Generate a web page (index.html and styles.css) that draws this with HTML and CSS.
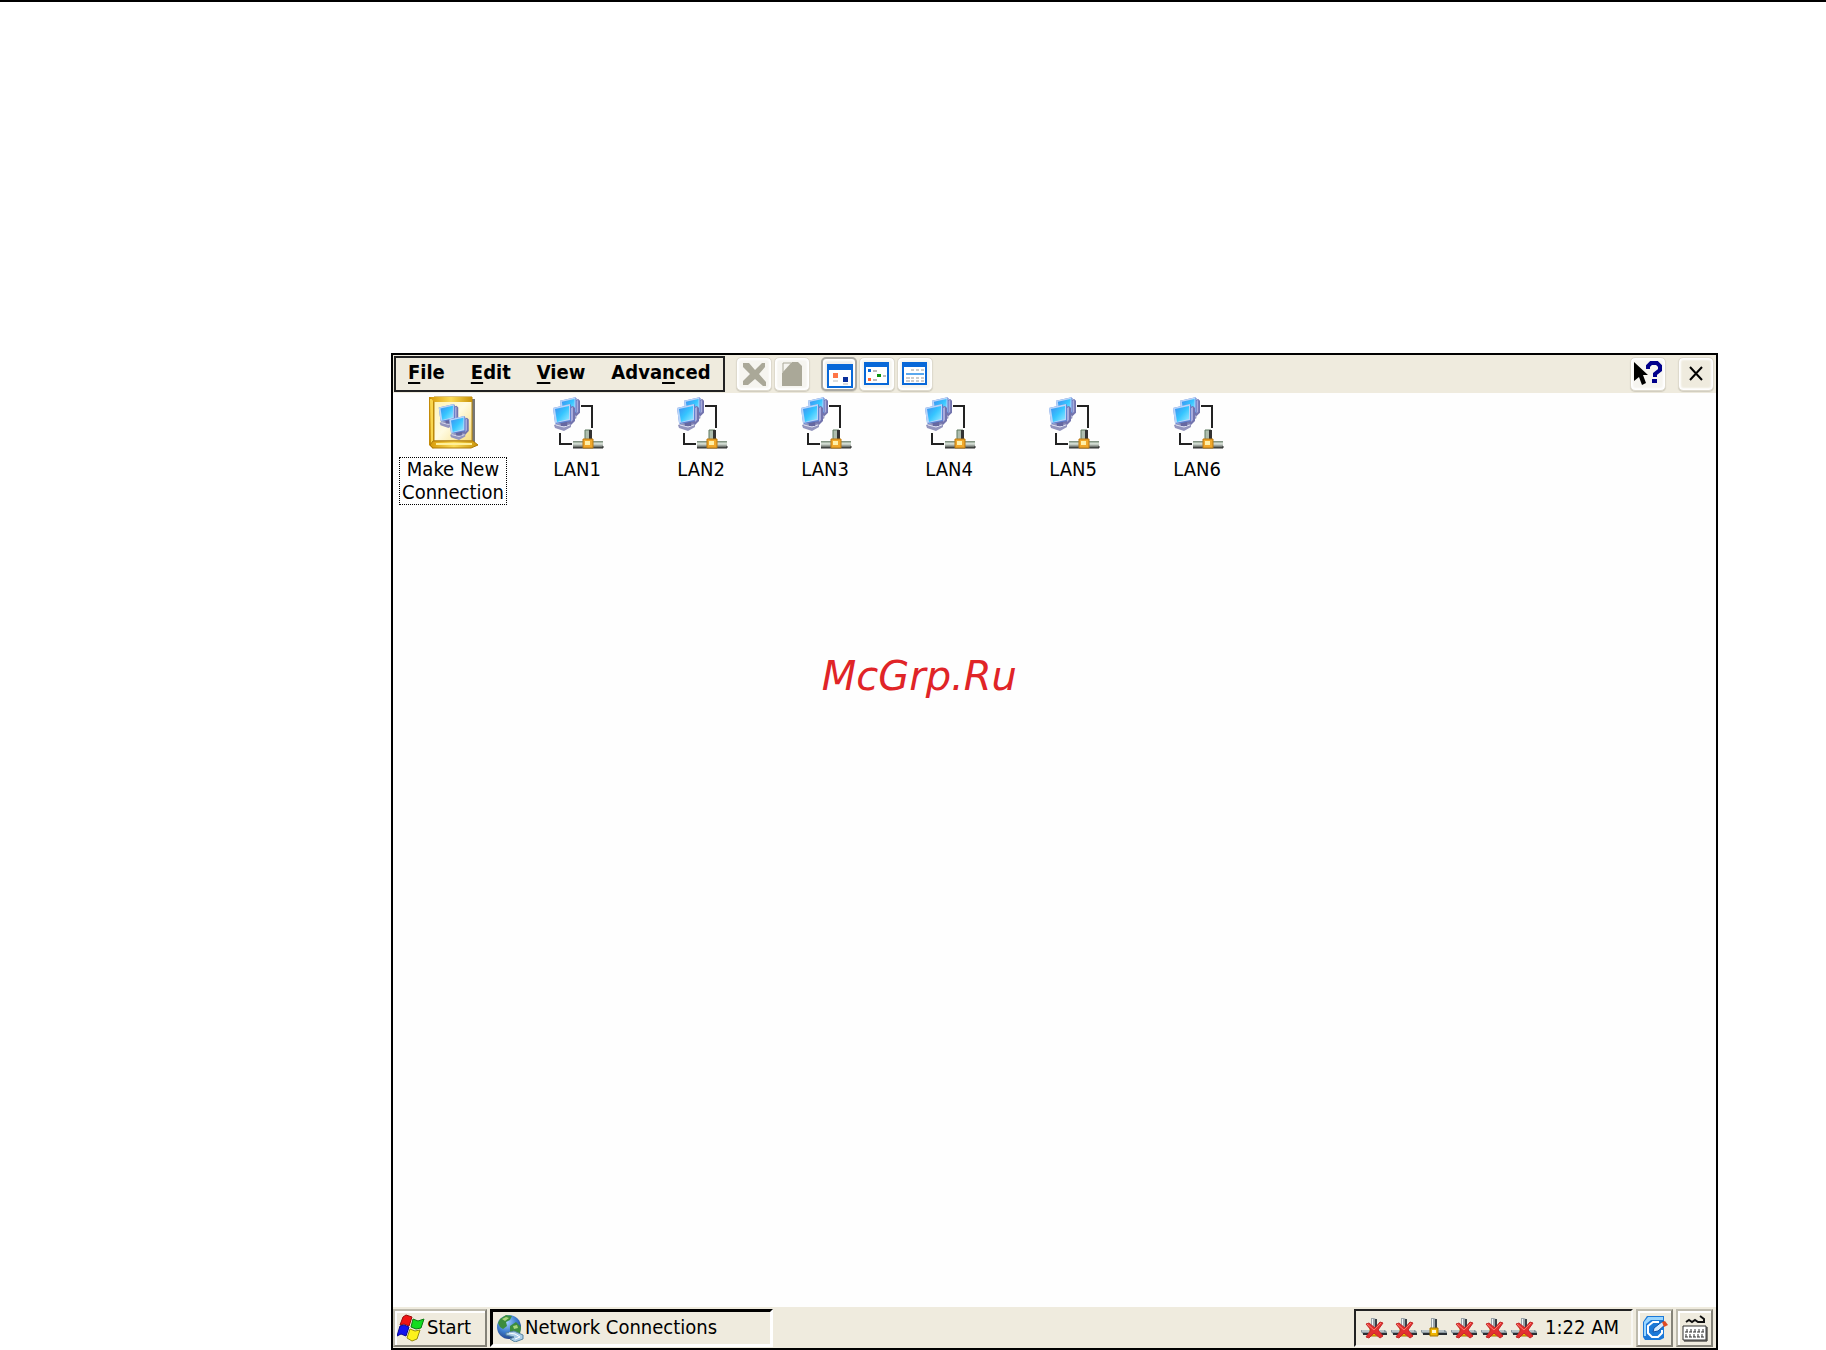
FILE: index.html
```html
<!DOCTYPE html>
<html lang="en">
<head>
    <meta charset="UTF-8">
    <meta name="viewport" content="width=device-width, initial-scale=1.0">
    <title>Network Connections</title>
    <link rel="stylesheet" href="styles.css">
</head>
<body>
    <!-- Shared icons -->
    <svg class="sprite" aria-hidden="true">
        <defs>
            <linearGradient id="glass" x1="0" y1="0" x2="1" y2="1">
                <stop offset="0" stop-color="#3f8df0"/>
                <stop offset="0.5" stop-color="#35c5ff"/>
                <stop offset="1" stop-color="#9beaff"/>
            </linearGradient>
            <linearGradient id="gold" x1="0" y1="0" x2="1" y2="0">
                <stop offset="0" stop-color="#d79a08"/>
                <stop offset="0.5" stop-color="#fbdc58"/>
                <stop offset="1" stop-color="#c99207"/>
            </linearGradient>
            <linearGradient id="paper" x1="0" y1="0" x2="1" y2="1">
                <stop offset="0" stop-color="#fff3b0"/>
                <stop offset="0.5" stop-color="#fffbe2"/>
                <stop offset="1" stop-color="#f7dc7c"/>
            </linearGradient>
            <linearGradient id="pipe" x1="0" y1="0" x2="0" y2="1">
                <stop offset="0" stop-color="#6f8370"/>
                <stop offset="0.4" stop-color="#dfe8df"/>
                <stop offset="1" stop-color="#3c403c"/>
            </linearGradient>
            <radialGradient id="sea" cx="0.4" cy="0.3" r="0.8">
                <stop offset="0" stop-color="#a8d5ff"/>
                <stop offset="0.5" stop-color="#3e7fd0"/>
                <stop offset="1" stop-color="#1b3478"/>
            </radialGradient>
        </defs>
        <symbol id="computer" viewBox="0 0 22 27">
            <path d="M17 3l3-1 2 2v13l-4 4-4-1z" fill="#7274ae"/>
            <path d="M18 4l2-1v13l-2 2z" fill="#a9acdc"/>
            <path d="M1 21l8-3 9 2v3l-7 4-9-3z" fill="#9395bd"/>
            <path d="M3 21l8 2 6-2" fill="none" stroke="#dfe1f3"/>
            <path d="M7 17h8l-1 5H8z" fill="#6668a0"/>
            <path d="M0 4l17-4 1 1v16L3 20l-1-1z" fill="#5f83d2"/>
            <path d="M0 4l17-4v16L2 19z" fill="#b9d5fa"/>
            <path d="M2 5l14-3v13L4 18z" fill="url(#glass)"/>
        </symbol>
        <symbol id="lan" viewBox="4 4 56 56">
            <use href="#computer" x="15" y="6" width="20" height="25"/>
            <use href="#computer" x="8" y="13" width="22" height="27"/>
            <path d="M36 15h11v22M15 42v11h12" fill="none" stroke="#222" stroke-width="2"/>
            <path d="M40 39h6v10h-6z" fill="#aebdae" stroke="#5f7a60"/>
            <path d="M44 39h3v10h-3z" fill="#333"/>
            <path d="M28 50h30v7H28z" fill="url(#pipe)"/>
            <path d="M28 57h30v-2" fill="none" stroke="#333"/>
            <path d="M38 48h10v9H38z" fill="#f0a82c" stroke="#b97910"/>
            <path d="M40 50h5v4h-5z" fill="#fff0a8"/>
        </symbol>
        <symbol id="plug" viewBox="0 0 26 22">
            <path d="M10 1h3l2 1v11h-5z" fill="#9ba5ab"/>
            <path d="M11 2h1v10h-1z" fill="#f1f5f7"/>
            <path d="M14 2h2v11h-2z" fill="#3a4248"/>
            <path d="M0 13h24l2 2v2H2l-2-2z" fill="#8c999f"/>
            <path d="M1 14h22" stroke="#e4eced"/>
            <path d="M2 17h24" stroke="#292e32" stroke-width="2"/>
            <path d="M9 11h8v8H9z" fill="#efb400" stroke="#a87800"/>
            <path d="M11 13h4v3h-4z" fill="#fff9cc"/>
        </symbol>
        <symbol id="plug-off" viewBox="0 0 26 22">
            <use href="#plug" width="26" height="22"/>
            <path d="M5 7l3-1 6 5 5-6 3 1-5 7 5 6-3 2-6-5-5 5-3-1 5-7z" fill="#e33131" stroke="#c42a2a"/>
            <path d="M6 7l7 6 7-7" fill="none" stroke="#ff7b70"/>
        </symbol>
    </svg>

    <main class="screen">
        <!-- Toolbar -->
        <header class="toolbar">
            <nav class="menu">
                <button type="button"><u>F</u>ile</button>
                <button type="button"><u>E</u>dit</button>
                <button type="button"><u>V</u>iew</button>
                <button type="button">Adva<u>n</u>ced</button>
            </nav>
            <div class="tools">
                <button type="button" class="tool" aria-label="Delete" disabled>
                    <svg width="28" height="28" viewBox="0 0 28 28"><path d="M3 3h6l6 7 7-7h3v4l-6 7 7 8v4h-3l-8-7-7 6H3v-4l7-7-7-7z" fill="#aaa898"/></svg>
                </button>
                <button type="button" class="tool" aria-label="Properties" disabled>
                    <svg width="28" height="28" viewBox="0 0 28 28"><path d="M14 2h6l4 4v20H4V13z" fill="#aaa898"/><path d="M5 12V3h8" fill="none" stroke="#aaa898"/></svg>
                </button>
            </div>
            <div class="tools">
                <button type="button" class="tool active" aria-label="Large icons">
                    <svg width="28" height="28" viewBox="0 0 28 28"><path d="M3 5h24v22H3z" fill="#fff" stroke="#0868d8" stroke-width="2"/><path d="M2 4h26v6H2z" fill="#0868d8"/><path d="M8 13h5v5H8z" fill="#ff7547"/><path d="M18 17h5v5h-5z" fill="#092e9b"/><path d="M8 21h5M18 24h5" stroke="#bbb"/></svg>
                </button>
                <button type="button" class="tool" aria-label="Small icons">
                    <svg width="28" height="28" viewBox="0 0 28 28"><path d="M2 3h23v21H2z" fill="#fff" stroke="#0868d8" stroke-width="2"/><path d="M1 2h25v5H1z" fill="#0868d8"/><path d="M5 9h3v3H5z" fill="#0868d8"/><path d="M14 14h4v3h-4z" fill="#0c950c"/><path d="M5 18h3v3H5z" fill="#ff6531"/><path d="M10 11h4M20 16h3M10 20h4" stroke="#bbb" stroke-width="2"/></svg>
                </button>
                <button type="button" class="tool" aria-label="Details">
                    <svg width="28" height="28" viewBox="0 0 28 28"><path d="M2 3h23v21H2z" fill="#fff" stroke="#0868d8" stroke-width="2"/><path d="M1 2h25v5H1z" fill="#0868d8"/><path d="M5 14h18" stroke="#5aa8ee" stroke-width="2"/><path d="M10 10h3m2 0h3m2 0h3M5 18h4m1 0h3m2 0h3m2 0h3M5 21h4m1 0h3m2 0h3m2 0h3" stroke="#999"/></svg>
                </button>
            </div>
            <div class="tools window-tools">
                <button type="button" class="tool" aria-label="Help">
                    <svg width="28" height="28" viewBox="0 0 28 28"><path d="M0 2l14 13H9l3 8-4 2-3-8-5 4z" fill="#000"/><path d="M14 9V6l3-3h6l3 3v4l-5 4v3" fill="none" stroke="#00008b" stroke-width="4"/><path d="M18 19h5v4h-5z" fill="#00008b"/></svg>
                </button>
                <button type="button" class="tool close" aria-label="Close">
                    <svg width="28" height="28" viewBox="0 0 28 28"><path d="M8 7l12 13M20 7L8 20" stroke="#000" stroke-width="2"/></svg>
                </button>
            </div>
        </header>

        <!-- Connections -->
        <section class="connections">
            <a href="#new" class="item selected">
                <svg width="56" height="56" viewBox="15 4 56 56">
                    <path d="M62 8h3v45h-4z" fill="#777"/>
                    <path d="M19 6h6v44l-2 8-4-4z" fill="#c48b08"/>
                    <path d="M20 8h3v44l-2 3z" fill="#f9d64d"/>
                    <path d="M24 6h38v44H24z" fill="url(#paper)" stroke="#b7850b"/>
                    <path d="M20 6h42v5H24z" fill="url(#gold)"/>
                    <path d="M23 50h40l5 4-7 3H23l-3-3z" fill="url(#gold)" stroke="#b07b08"/>
                    <path d="M26 53h36" stroke="#fff09a" stroke-width="2"/>
                    <use href="#computer" x="28" y="13" width="21" height="24"/>
                    <use href="#computer" x="39" y="25" width="20" height="24"/>
                </svg>
                <span class="label">Make New<br>Connection</span>
            </a>
            <a href="#lan1" class="item"><svg width="56" height="56"><use href="#lan"/></svg><span class="label">LAN1</span></a>
            <a href="#lan2" class="item"><svg width="56" height="56"><use href="#lan"/></svg><span class="label">LAN2</span></a>
            <a href="#lan3" class="item"><svg width="56" height="56"><use href="#lan"/></svg><span class="label">LAN3</span></a>
            <a href="#lan4" class="item"><svg width="56" height="56"><use href="#lan"/></svg><span class="label">LAN4</span></a>
            <a href="#lan5" class="item"><svg width="56" height="56"><use href="#lan"/></svg><span class="label">LAN5</span></a>
            <a href="#lan6" class="item"><svg width="56" height="56"><use href="#lan"/></svg><span class="label">LAN6</span></a>
        </section>

        <!-- Taskbar -->
        <footer class="taskbar">
            <button type="button" class="raised start">
                <svg width="28" height="28" viewBox="0 0 28 28">
                    <path d="M6 3l3-2 6 2-3 9-5-2-4 1z" fill="#f01414" stroke="#9b0b0b"/>
                    <path d="M16 5l5 2 6-2-3 9-5 1-5-2z" fill="#12dc20" stroke="#0b7c12"/>
                    <path d="M3 12l4-1 5 2-3 9-5-2-4 2z" fill="#1414ef" stroke="#080894"/>
                    <path d="M13 15l5 2 5-1-3 9-5 2-5-3z" fill="#fdf21b" stroke="#968d0b"/>
                </svg>
                Start
            </button>
            <button type="button" class="task">
                <svg width="28" height="28" viewBox="0 0 28 28">
                    <circle cx="13" cy="13" r="12" fill="url(#sea)"/>
                    <path d="M4 5l6-4 6 1-2 4-4 2 1 4-4 3-3-2-2-4zM14 12l6-4 5 5-1 7-5-2-5 1z" fill="#3c8d3e"/>
                    <path d="M6 5l4-2 3 1-4 3zM17 12l4-1 1 3-4 1z" fill="#a9d67d"/>
                    <path d="M10 19l8-2 9 4v4l-8 3-5-3 4-2-8-2z" fill="#a9cde8" stroke="#57839f"/>
                    <path d="M13 19l6 1 5 3-5 2" fill="none" stroke="#fff"/>
                </svg>
                Network Connections
            </button>
            <div class="tray">
                <svg width="26" height="22"><use href="#plug-off"/></svg>
                <svg width="26" height="22"><use href="#plug-off"/></svg>
                <svg width="26" height="22"><use href="#plug"/></svg>
                <svg width="26" height="22"><use href="#plug-off"/></svg>
                <svg width="26" height="22"><use href="#plug-off"/></svg>
                <svg width="26" height="22"><use href="#plug-off"/></svg>
                <time datetime="01:22">1:22 AM</time>
            </div>
            <button type="button" class="raised square" aria-label="Show desktop">
                <svg width="28" height="28" viewBox="0 0 28 28">
                    <path d="M6 2h17v22l-4 2H4l-2-3V8z" fill="#1c79d8"/>
                    <path d="M7 3h15v3H10L5 10v12H3V8z" fill="#9ad6ff"/>
                    <path d="M18 8h-6l-5 4v7l4 4h6l4-4v-3" fill="none" stroke="#fff" stroke-width="2"/>
                    <path d="M12 18l1-4 9-7 3 3-8 7z" fill="#d5eaff" stroke="#1353a8"/>
                    <path d="M21 8l3-1 3 4-4 2z" fill="#e04a22"/>
                </svg>
            </button>
            <button type="button" class="raised square" aria-label="Keyboard">
                <svg width="28" height="28" viewBox="0 0 28 28">
                    <path d="M5 8l3-2 3 2 3-2 3 2h6v-3l-4-3" fill="none" stroke="#111" stroke-width="2"/>
                    <path d="M2 12h23v14H2z" fill="#fff" stroke="#333"/>
                    <path d="M6 15v3m4-3v3m4-3v3m4-3v3m4-3v3M5 20v3m4-3v3m4-3v3m4-3v3m4-3v3" stroke="#333"/>
                    <path d="M4 18h19M4 23h19" stroke="#333" stroke-dasharray="3 1"/>
                    <path d="M26 13v14H3" fill="none" stroke="#111"/>
                </svg>
            </button>
        </footer>
    </main>
    <div class="watermark">McGrp.Ru</div>
</body>
</html>
```
FILE: styles.css
```css
* {
    box-sizing: border-box;
}
body {
    position: relative;
    display: flex;
    min-height: 100vh;
    margin: 0;
    padding: 351px 108px 0 391px;
    border-top: 2px solid #000;
    background-color: #fff;
    color: #000;
    font-family: "DejaVu Sans Condensed", "Noto Sans", sans-serif;
    font-size: 20px;
    line-height: 23px;
}
button {
    padding: 0;
    border: none;
    background: none;
    color: inherit;
    font: inherit;
}
svg {
    display: block;
    flex-shrink: 0;
}
.sprite {
    position: absolute;
    width: 0;
    height: 0;
}
.screen {
    display: flex;
    flex: 1;
    flex-direction: column;
    border: 2px solid #000;
    background-color: #fefefe;
}
/* Toolbar */
.toolbar {
    display: flex;
    align-items: center;
    gap: 11px;
    height: 38px;
    padding: 0 2px 0 1px;
    background-color: #efebde;
}
.menu {
    display: flex;
    align-items: center;
    gap: 26px;
    height: 36px;
    padding: 0 12px 3px;
    border: 2px solid #222;
    font-weight: bold;
}
.menu u {
    text-decoration-thickness: 2px;
    text-underline-offset: 3px;
}
.tools {
    display: flex;
    gap: 2px;
}
.window-tools {
    gap: 12px;
    margin-left: auto;
}
.tool {
    display: flex;
    align-items: center;
    justify-content: center;
    width: 36px;
    height: 34px;
    border: 1px solid #dedacd;
    border-radius: 5px;
    background-color: #f6f5f0;
    box-shadow: inset 0 0 2px 2px #fff, 0 1px 1px #cfcbbd;
}
.tool.active {
    border: 2px solid #aaa9a3;
    background-color: #f0f0ee;
}
.close {
    background-color: #efebde;
}
/* Connections */
.connections {
    display: flex;
    flex: 1;
    flex-wrap: wrap;
    align-content: flex-start;
    gap: 4px;
    padding-top: 2px;
}
.item {
    display: flex;
    flex-direction: column;
    align-items: center;
    gap: 6px;
    width: 120px;
    color: inherit;
    text-align: center;
    text-decoration: none;
}
.label {
    padding: 0 2px;
    border: 1px solid transparent;
}
.selected .label {
    border: 1px dotted #000;
}
/* Taskbar */
.taskbar {
    display: flex;
    align-items: center;
    gap: 3px;
    height: 41px;
    padding-right: 3px;
    background-color: #efebde;
}
.raised {
    display: flex;
    align-items: center;
    justify-content: center;
    height: 38px;
    border: 2px solid;
    border-color: #bdbaad #848278 #848278 #bdbaad;
    box-shadow: inset 1px 1px 0 1px #fff;
}
.start {
    justify-content: flex-start;
    gap: 2px;
    width: 94px;
    padding-left: 2px;
}
.task {
    display: flex;
    align-items: center;
    gap: 1px;
    width: 283px;
    height: 38px;
    padding-left: 3px;
    border: 3px solid;
    border-color: #000 #fff #fff #000;
}
.tray {
    display: flex;
    align-items: center;
    gap: 4px;
    height: 38px;
    margin-left: auto;
    padding: 0 12px 0 5px;
    border: 2px solid;
    border-color: #222 #f8f7f2 #f8f7f2 #222;
}
.tray time {
    margin-left: 4px;
}
.square {
    width: 37px;
}
.watermark {
    position: absolute;
    top: 50%;
    left: 45%;
    transform: translateY(-50%);
    color: #e02427;
    font-family: "DejaVu Sans", sans-serif;
    font-size: 40px;
    font-style: italic;
    line-height: 44px;
}
```
